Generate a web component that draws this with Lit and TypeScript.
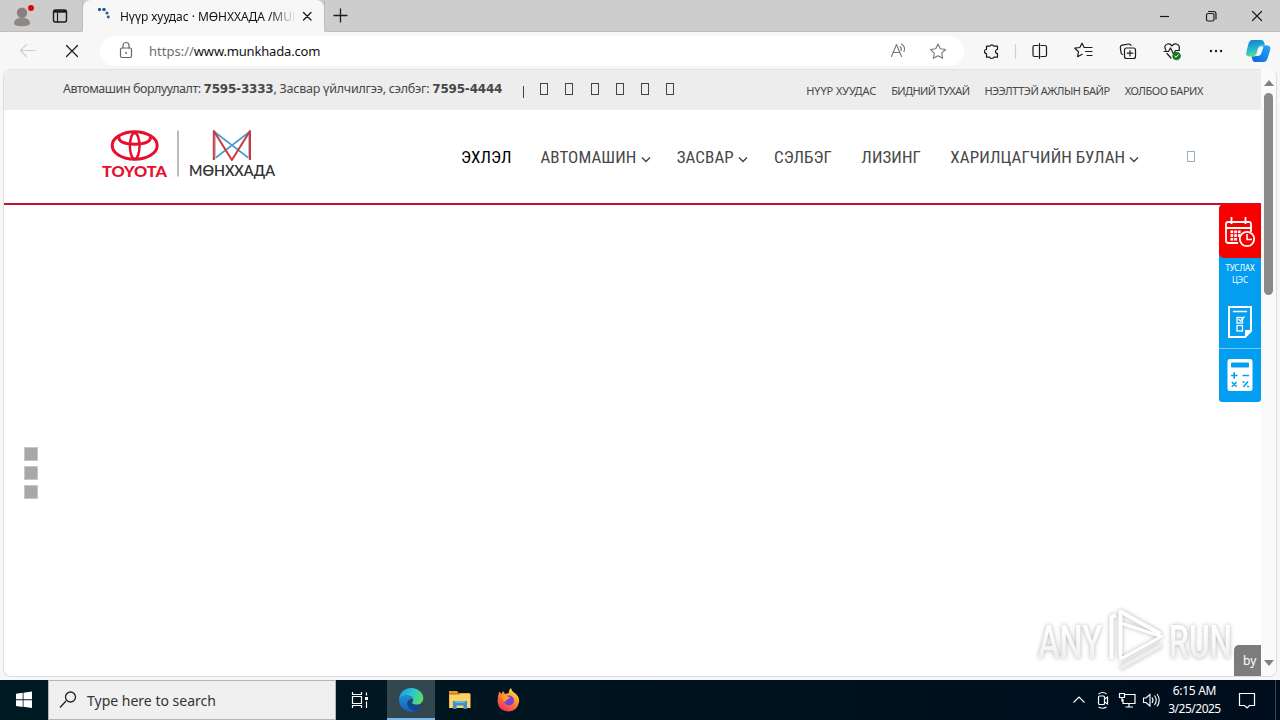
import { LitElement, html, css, svg } from 'lit';
import { customElement } from 'lit/decorators.js';
import { classMap } from 'lit/directives/class-map.js';

@customElement('browser-chrome')
class BrowserChrome extends LitElement {
  static styles = css`
    :host {
      display: block;
      font-family: 'Noto Sans', sans-serif;
      color: #111;
    }

    svg {
      display: block;
      flex: none;
      fill: none;
      stroke: #1b1b1b;
      stroke-width: 1.2;
      stroke-linecap: round;
      stroke-linejoin: round;
    }

    .titlebar {
      display: flex;
      height: 32px;
      background: #cdcdcd;
    }

    .corner {
      display: flex;
      width: 83px;
      box-sizing: border-box;
      border-bottom: 1px solid #bdbdbd;
      border-right: 1px solid #bdbdbd;
      border-radius: 0 0 5px 0;
    }

    .tab {
      display: flex;
      align-items: center;
      width: 241px;
      background: #f7f7f7;
      border-radius: 8px 8px 0 0;
    }

    .tab-title {
      width: 174px;
      margin-left: 8px;
      overflow: hidden;
      white-space: nowrap;
      font-size: 12px;
      letter-spacing: -0.05px;
      -webkit-mask-image: linear-gradient(90deg, #000 150px, transparent 176px);
      mask-image: linear-gradient(90deg, #000 150px, transparent 176px);
    }

    .spacer {
      flex: 1;
      display: flex;
      box-sizing: border-box;
      border-bottom: 1px solid #bdbdbd;
      border-left: 1px solid #bdbdbd;
      border-radius: 0 0 0 5px;
    }

    .controls {
      margin-left: auto;
    }

    .toolbar {
      display: flex;
      align-items: center;
      height: 37px;
      background: #f7f7f7;
    }

    .address {
      display: flex;
      align-items: center;
      box-sizing: border-box;
      width: 864px;
      height: 30px;
      margin-left: 1px;
      border-radius: 15px;
      background: #fff;
      font-size: 13px;
    }

    .url {
      margin-left: 9px;
      letter-spacing: -0.17px;
      flex: 1;
    }

    .scheme {
      color: #6e6e6e;
      letter-spacing: 0;
    }
  `;

  render() {
    return html`
      <div class="titlebar">
        <div class="corner">
          <svg width="82" height="31">
            <circle cx="22" cy="12.7" r="5.2" fill="#8a7f7c" stroke="none" />
            <path d="M14 24c0-5 3-6 8-6s8 1 8 6c-2 3-14 3-16 0z" fill="#8f8986" stroke="none" />
            <circle cx="31" cy="8" r="3" fill="#d60c0c" stroke="none" />
            <rect x="53.500" y="10" width="13" height="12" rx="2" stroke-width="1.4" />
            <path d="M54 11.500h12" stroke-width="2.400" stroke-linecap="butt" />
            <path d="M57.500 13v9" stroke-width="1.200" />
          </svg>
        </div>
        <div class="tab">
          <svg width="29" height="32">
            <g fill="#215a94" stroke="none">
              <rect x="15" y="8" width="3" height="3" rx="1" />
              <circle cx="21" cy="9.5" r="1.8" />
              <circle cx="24" cy="13" r="1.5" />
              <circle cx="25.3" cy="17" r="1.4" />
            </g>
          </svg>
          <div class="tab-title">Нүүр хуудас · МӨНХХАДА /MUN</div>
          <svg width="30" height="32">
            <path d="M9.500 12.500l7.500 7.500m0-7.500l-7.500 7.500" stroke-width="1.300" />
          </svg>
        </div>
        <div class="spacer">
          <svg width="32" height="31"><path d="M9 15.500h13M15.500 9v13" stroke-width="1.300" /></svg>
          <svg class="controls" width="126" height="31">
            <path d="M6 16.500h9" stroke-linecap="butt" />
            <rect x="52.500" y="13.500" width="7.500" height="7.500" rx="1.500" />
            <path d="M54.500 11.500h5q2.500 0 2.500 2.500v5" />
            <path d="M98.500 11.500l9 9m0-9l-9 9" />
          </svg>
        </div>
      </div>
      <div class="toolbar">
        <svg width="99" height="37">
          <path d="M35.500 18.500h-15m6-6l-6 6 6 6" stroke="#cfcfcf" stroke-width="1.100" />
          <path d="M66.500 13.500l11 11m0-11l-11 11" />
        </svg>
        <div class="address">
          <svg width="40" height="30">
            <g stroke="#666">
              <rect x="20.500" y="12" width="11" height="9.500" rx="1.500" />
              <path d="M23 12V9.500a3 3 0 016 0V12" />
            </g>
            <circle cx="26" cy="17" r=".9" fill="#666" stroke="none" />
          </svg>
          <div class="url"><span class="scheme">https://</span>www.munkhada.com</div>
          <svg width="84" height="30">
            <g stroke="#777" stroke-width="1.100">
              <path d="M11.500 20.500l5-12 5 12M13.500 16.500h6M20 10.500q2 1.500 1 4M21.500 8q4.500 3 2.500 7.500" />
              <path d="M58 8l2.300 4.800 5.200.7-3.800 3.600.9 5.200-4.600-2.500-4.600 2.500.9-5.200-3.800-3.600 5.200-.7z" />
            </g>
          </svg>
        </div>
        <svg width="316" height="37">
          <path
            d="M22.500 14.200h3.300a2.200 2.200 0 014 0h3.700v3.300a2 2 0 100 4v3.700h-3.700a2.200 2.200 0 01-4 0h-3.300v-3.700a2 2 0 110-4z"
          />
          <path d="M51.500 12.500v14" stroke="#d0d0d0" />
          <path d="M74 13.500h-3.500q-1.500 0-1.500 1.500v8q0 1.500 1.500 1.500H74M77 13.500h4q1.500 0 1.500 1.500v8q0 1.500-1.500 1.500h-4M75.500 11.500v15" />
          <path d="M123 15.500h-2.800l-2.200-4.300-2.200 4.300-5 .7 3.700 3.500-.9 5 4.600-2.400M123 15.500h5M121.500 19.500h6.500M123 23.500h5" />
          <rect x="160.500" y="16" width="11" height="10.500" rx="2" />
          <path d="M166 18.500v5.500M163.300 21.200h5.500M158.500 22.500q-1.500-.5-1.500-2l-.7-5q0-2 1.700-2.300l7-1.200q1.700 0 2 1.500" />
          <path
            d="M202 18.500q-3-5 1.500-6.500 3-.7 4.500 2 1.500-2.700 4.500-2 4 1.500 2.500 6M200 19.500h4.500l2-3.500 3 6 2-3.500h4M203 21.500l4 4.500"
          />
          <circle cx="212.500" cy="24" r="3.800" fill="#117a1a" stroke="#117a1a" stroke-width=".8" />
          <path d="M210.800 24.200l1.200 1 2.200-2.400" stroke="#fff" stroke-width="1" />
          <g fill="#1b1b1b" stroke="none">
            <circle cx="247" cy="19" r="1.200" /><circle cx="252" cy="19" r="1.200" /><circle cx="257" cy="19" r="1.200" />
          </g>
          <defs>
            <linearGradient id="cop-a" x1="0" y1="0" x2=".2" y2="1">
              <stop offset="0" stop-color="#167fd2" /><stop offset=".6" stop-color="#24b5d4" /><stop offset="1" stop-color="#5ddc8d" />
            </linearGradient>
            <linearGradient id="cop-b" x1="1" y1="0" x2="0" y2="1">
              <stop offset="0" stop-color="#25a8f5" /><stop offset="1" stop-color="#0c63da" />
            </linearGradient>
          </defs>
          <g stroke="none">
            <path d="M288 8h9q2.500 0 3.300 3l.7 2.500h-3q-3 0-4 3l-2 6q-.8 2-3 2h-4q-4-.5-2.500-5l2-8q1.200-3.500 3.500-3.500z" fill="url(#cop-a)" />
            <path d="M300 13.500h3.500q4 .5 2.500 5l-2.500 8q-1.200 3.500-4 3.500H291q-2 0-2.700-2.500l-.8-3h2q2.500 0 3.300-2l2.400-6q1-3 4.800-3z" fill="url(#cop-b)" />
            <path d="M297 14.500h2.500l-2 6.500q-1 3-4 3h-2.500q1.500-.5 2-2l1.600-5q.7-2 2.400-2.500z" fill="#f4fbff" />
          </g>
        </svg>
      </div>
    `;
  }
}

@customElement('site-header')
class SiteHeader extends LitElement {
  static styles = css`
    :host {
      display: block;
      color: #484848;
    }

    .topbar {
      display: flex;
      align-items: flex-start;
      box-sizing: border-box;
      height: 41px;
      padding: 0 58px 0 59px;
      background: #ededed;
      border-top: 1px solid #e2e2e2;
      white-space: nowrap;
    }

    .phones {
      width: 461px;
      padding-top: 10px;
      font: 12.5px/18px 'Noto Sans', sans-serif;
      letter-spacing: -0.24px;
    }

    .sales {
      letter-spacing: -0.45px;
    }

    .phones b {
      font: bold 12px/18px 'DejaVu Sans', sans-serif;
      letter-spacing: -0.2px;
    }

    .socials {
      display: flex;
      gap: 17.200px;
      padding-top: 13px;
    }

    .divider {
      width: 1px;
      height: 12px;
      margin: 3px -1px 0 -1px;
      background: #444;
    }

    .glyph {
      box-sizing: border-box;
      width: 8px;
      height: 12px;
      border: 1px solid #444;
    }

    .links {
      display: flex;
      gap: 15px;
      margin-left: auto;
      padding-top: 12px;
      font: 11px/18px 'Noto Sans', sans-serif;
    }

    .main {
      display: flex;
      align-items: center;
      height: 93px;
      border-bottom: 2px solid #c4122f;
      background: #fff;
    }

    .logo {
      display: block;
      flex: none;
      margin-left: 90px;
    }

    .nav {
      display: flex;
      align-items: center;
      margin-left: 177px;
      font: 17px/24px Roboto, sans-serif;
      font-stretch: 75%;
      white-space: nowrap;
    }

    .item {
      display: flex;
      align-items: center;
      margin-right: 29.400px;
      letter-spacing: 0.07px;
    }

    .item.active {
      margin-right: 29px;
      color: #000;
    }

    .item.menu {
      margin-right: 26px;
    }

    .chevron {
      margin: 6px 0 0 4.200px;
      fill: none;
      stroke: #444;
      stroke-width: 1.4;
    }

    .search {
      height: 11px;
      margin-left: 22px;
      border-color: #9bb0bc;
    }
  `;

  items = [
    { label: 'ЭХЛЭЛ', active: true },
    { label: 'АВТОМАШИН', menu: true },
    { label: 'ЗАСВАР', menu: true },
    { label: 'СЭЛБЭГ' },
    { label: 'ЛИЗИНГ' },
    { label: 'ХАРИЛЦАГЧИЙН БУЛАН', menu: true },
  ];

  links = [
    { label: 'НҮҮР ХУУДАС', tracking: -0.1 },
    { label: 'БИДНИЙ ТУХАЙ', tracking: -0.6 },
    { label: 'НЭЭЛТТЭЙ АЖЛЫН БАЙР', tracking: -0.48 },
    { label: 'ХОЛБОО БАРИХ', tracking: -0.45 },
  ];

  render() {
    return html`
      <div class="topbar">
        <div class="phones">
          <span class="sales">Автомашин борлуулалт: </span><b>7595-3333</b>, Засвар үйлчилгээ, сэлбэг: <b>7595-4444</b>
        </div>
        <div class="socials">
          <div class="divider"></div>
          ${[1, 2, 3, 4, 5, 6].map(() => html`<div class="glyph"></div>`)}
        </div>
        <div class="links">
          ${this.links.map((l) => html`<span style="letter-spacing: ${l.tracking}px">${l.label}</span>`)}
        </div>
      </div>
      <div class="main">
        <svg class="logo" width="190" height="60" viewBox="94 126.500 190 60">
          <g fill="none" stroke="#e60f2d">
            <ellipse cx="134.700" cy="145" rx="22.500" ry="13.800" stroke-width="3" />
            <ellipse cx="134.700" cy="145.500" rx="4.800" ry="13" stroke-width="2.500" />
            <path d="M119 136q-1 7.500 15.700 7.800 16.700-.3 15.700-7.800" stroke-width="3" />
          </g>
          <text x="102" y="176" textLength="65" lengthAdjust="spacingAndGlyphs" font-family="Lato" font-weight="900" font-size="15.500" fill="#e60f2d">TOYOTA</text>
          <path d="M178 130v46" stroke="#999" stroke-width="1.300" />
          <g fill="none" stroke-width="1.700" stroke-linejoin="round">
            <path d="M214 131l36 27.500M250 131l-36 27.500" stroke="#4a9fd0" />
            <path d="M215.500 133.500v25M248.500 133.500v25" stroke="#b9c6d0" stroke-width="1" />
            <path d="M213.800 159.500V130.500L231.900 159.500 250 130.500v29" stroke="#c93a42" stroke-width="2" />
          </g>
          <text x="189" y="175.500" textLength="86" lengthAdjust="spacingAndGlyphs" font-family="Lato" font-weight="600" font-size="14.500" fill="#333">МӨНХХАДА</text>
        </svg>
        <div class="nav">
          ${this.items.map(
            (i) => html`
              <div class=${classMap({ item: true, active: !!i.active, menu: !!i.menu })}>
                ${i.label}
                ${i.menu ? html`<svg class="chevron" width="10" height="7"><path d="M1 1.500l4 4 4-4" /></svg>` : ''}
              </div>
            `
          )}
          <div class="glyph search"></div>
        </div>
      </div>
    `;
  }
}

@customElement('side-tools')
class SideTools extends LitElement {
  static styles = css`
    :host {
      display: block;
      width: 42px;
      font: 8px/12px 'Noto Sans', sans-serif;
      color: #fff;
      text-align: center;
      background: #049ef0;
      border-radius: 5px 0 3px 3px;
    }

    svg {
      display: block;
      fill: none;
      stroke: #fff;
      stroke-width: 1.8;
    }

    .booking {
      height: 54px;
      background: #f60000;
      border-radius: 5px 0 0 5px;
    }

    .caption {
      height: 36px;
      padding-top: 4px;
      letter-spacing: -0.1px;
    }

    .sheet {
      border-bottom: 1px solid #7cc8f5;
    }
  `;

  render() {
    return html`
      <div class="booking">
        <svg width="42" height="54" viewBox="1219 204 42 54">
          <path d="M1238 243h-9.500q-2.500 0-2.500-2.500V224q0-2 2-2h21q2 0 2 2v8M1226 228h25M1231.500 217v7M1245.500 217v7" />
          <g fill="#fff" stroke="none">
            ${[0, 1, 2].map((r) =>
              [0, 1, 2].map((c) =>
                r === 2 && c === 2 ? '' : svg`<rect x=${1230.5 + c * 3.7} y=${230.5 + r * 3.7} width="2.7" height="2.7" />`
              )
            )}
          </g>
          <circle cx="1247" cy="239" r="7.200" fill="#f60000" />
          <path d="M1247 234v5.500h5" stroke-width="1.500" />
        </svg>
      </div>
      <div class="caption">ТУСЛАХ<br />ЦЭС</div>
      <svg class="sheet" width="42" height="50" viewBox="1219 298 42 50">
        <path d="M1229 307h22v24l-6 6h-16z" stroke-width="2" />
        <path d="M1252 330h-7v8z" fill="#fff" stroke="none" />
        <path d="M1233 311.500h14" stroke-width="1.500" />
        <g stroke-width="1.300">
          <rect x="1237" y="317.500" width="5.500" height="5.500" />
          <rect x="1237" y="325.500" width="5.500" height="5.500" />
          <path d="M1238.500 319l2 2 4-4.500" />
        </g>
      </svg>
      <svg width="42" height="53" viewBox="1219 349 42 53">
        <rect x="1227.500" y="359" width="25" height="32" rx="2.500" fill="#fff" stroke="none" />
        <rect x="1231" y="362.500" width="18" height="5" rx="1" fill="#049ef0" stroke="none" />
        <path
          d="M1231 375.500h6.500M1234.200 372.300v6.500M1242.500 375.500h6.500M1231.800 382l4.800 4.800m0-4.800l-4.800 4.800M1248 381.500l-4.500 5.500M1242.500 382h2.200M1247 386.500h2.200"
          stroke="#049ef0"
          stroke-width="1.600"
        />
      </svg>
    `;
  }
}

@customElement('task-bar')
class TaskBar extends LitElement {
  static styles = css`
    :host {
      display: flex;
      height: 40px;
      background: linear-gradient(90deg, #001a24, #00131f 55%, #000d1c);
      font-family: 'Noto Sans', sans-serif;
      color: #fff;
    }

    svg {
      display: block;
      flex: none;
      fill: none;
      stroke: #fff;
      stroke-width: 1.2;
    }

    .search {
      display: flex;
      align-items: center;
      box-sizing: border-box;
      width: 288px;
      background: #f0f0f0;
      border: 1px solid #b5b5b5;
      color: #333;
      font-size: 14px;
    }

    .edge {
      box-sizing: border-box;
      width: 48px;
      background: #33474f;
      border-bottom: 2px solid #76b9ed;
    }

    .tray {
      margin-left: auto;
    }

    .clock {
      width: 60px;
      font: 12px/18px 'Noto Sans', sans-serif;
      letter-spacing: -0.5px;
      text-align: center;
      padding: 2px 0 0 1px;
      box-sizing: border-box;
    }

    .time {
      letter-spacing: -0.3px;
    }

    .peek {
      width: 4px;
      border-left: 1px solid #3c4650;
    }
  `;

  render() {
    return html`
      <svg width="48" height="40">
        <path d="M16 13.800l6.700-1v6.500H16zM23.500 12.700l8.500-1.200v7.800h-8.500zM16 20.200h6.700v6.700l-6.700-1zM23.500 20.200H32V28l-8.500-1.200z" fill="#fff" stroke="none" />
      </svg>
      <div class="search">
        <svg width="38" height="38"><path d="M17 20l-6 6.500M26.500 16a5 5 0 11-10 0 5 5 0 0110 0z" stroke="#222" stroke-width="1.300" /></svg>
        Type here to search
      </div>
      <svg width="51" height="40">
        <path d="M16.500 12v2.500h9V12M16.500 28v-2.500h9V28M16.500 16.500h9v7h-9zM30.500 12.500v3M30.500 21.500v6.500" />
        <rect x="29" y="17" width="3" height="3" fill="#fff" stroke="none" />
      </svg>
      <div class="edge">
        <svg width="48" height="38">
          <defs>
            <linearGradient id="edge-a" x1="0" x2="1" y1=".3" y2=".6">
              <stop offset="0" stop-color="#1b9de2" /><stop offset=".5" stop-color="#2cc5d1" /><stop offset="1" stop-color="#5fdc5f" />
            </linearGradient>
            <linearGradient id="edge-b" x1="0" x2="0" y1="0" y2="1">
              <stop offset="0" stop-color="#1b8fd9" /><stop offset="1" stop-color="#1460b8" />
            </linearGradient>
          </defs>
          <g stroke="none">
            <path d="M12 19.500C12.500 12 18 8 24 8c8 0 12.500 5.500 12.300 10.500C36 22.500 33 24.500 29.500 24.500c-3.500 0-5-1.200-4-2.500 2.500-3-1-6.500-5-6.500-4.500 0-7.500 2-8.500 4z" fill="url(#edge-a)" />
            <path d="M12 19.500c1.500-3 5-4.500 8.500-4 3 .3 5 2 5.300 4-3.500-1-6 1.500-5.300 5 .8 4 5 7 10 6C22 34.500 12 29 12 19.500z" fill="url(#edge-b)" />
            <path d="M20.500 24.500c-.7-3.500 1.500-5.500 4.500-5.300-2 2.500-.5 6 5 6 2.200 0 4-.7 5-1.300-1 3.500-4 6-6.500 6.500-4 .5-7.500-2.500-8-5.900z" fill="#10488f" />
          </g>
        </svg>
      </div>
      <svg width="49" height="40">
        <g stroke="none">
          <path d="M14 11h8l1.500 2H35v15H14z" fill="#e9a22c" />
          <rect x="14.500" y="14" width="21" height="14" fill="#fcd364" />
          <path d="M14 13h11v1.500H14z" fill="#c97c12" />
          <path d="M18 21h14v8h-3.500v-3.500h-7V29H18z" fill="#3a8fd3" />
          <path d="M20 21h10v2H20z" fill="#67b4e8" />
        </g>
      </svg>
      <svg width="49" height="40" viewBox="-.500 0 49 40">
        <defs>
          <linearGradient id="fox" x1=".8" x2=".2" y1="0" y2="1">
            <stop offset="0" stop-color="#fff04a" /><stop offset=".45" stop-color="#ff8a2b" /><stop offset="1" stop-color="#f5245f" />
          </linearGradient>
        </defs>
        <g stroke="none">
          <path d="M15 11.500l2 2.500 1.500-3 2 3 4-1q-.5-3 2-5 .5 3 3 4.500 6 4 5 9.500-1.500 9-10.500 9.500-10-.5-11-10 0-6 2-10z" fill="url(#fox)" />
          <circle cx="24.500" cy="20.500" r="5" fill="#7a3fd6" />
          <path d="M16.500 16q4-1.500 7 .5l2.500 1-3 2q-2 .5-2 2.500-3-1-4.500-6z" fill="#ff9a2c" />
        </g>
      </svg>
      <svg class="tray" width="104" height="40" viewBox="-4.500 0 104 40">
        <path d="M9 22.500l5.500-5.500 5.500 5.500" />
        <rect x="34" y="16" width="6" height="8.500" rx="1" />
        <path d="M40 19l3-2v7l-3-2M34 14q4.500-3 8 0M34 27q4.500 2.500 8 0" />
        <path d="M60 14.500h10.500v9H58.500V19M64.500 23.500v3M61 27h7.500M55 13.500h5v4h-5zM57.500 17.500v4" />
        <path d="M79 18h2.500l4-3.500v11.500l-4-3.500H79zM87.500 17.500q2 2.700 0 5.500M90 15.500q3.500 4.700 0 9.500M92.500 14q4.500 6.200 0 12.500" stroke-width="1.100" />
      </svg>
      <div class="clock"><span class="time">6:15 AM</span><br />3/25/2025</div>
      <svg width="51" height="40"><path d="M15.500 13.500h15v12h-5l-2.500 2.500-2.500-2.500h-5z" /></svg>
      <div class="peek"></div>
    `;
  }
}

@customElement('app-root')
class AppRoot extends LitElement {
  static styles = css`
    :host {
      display: flex;
      flex-direction: column;
      width: 1280px;
      height: 720px;
      overflow: hidden;
      background: #f7f7f7;
    }

    .window {
      flex: 1;
      display: flex;
      box-sizing: border-box;
      margin: 0 3px 3px;
      border: 1px solid #dcdcdc;
      border-top: 0;
      border-radius: 8px;
      overflow: hidden;
      background: #fff;
    }

    .page {
      position: relative;
      width: 1257px;
    }

    .tools {
      position: absolute;
      top: 135px;
      right: 0;
    }

    .bullets {
      position: absolute;
      left: 20px;
      top: 378px;
      display: grid;
      gap: 5px;
    }

    .bullet {
      width: 14px;
      height: 14px;
      box-sizing: border-box;
      background: #a8a8a8;
      border: 1px solid #c8c8c8;
    }

    .badge {
      position: absolute;
      right: 0;
      bottom: 0;
      width: 27px;
      height: 31px;
      box-sizing: border-box;
      padding-left: 9px;
      border-radius: 5px 0 0 0;
      background: #7c7c7c;
      color: #fff;
      font: 12px/31px 'Noto Sans', sans-serif;
    }

    .watermark {
      position: absolute;
      right: 28px;
      bottom: 2px;
      overflow: visible;
      filter: drop-shadow(0 0 2px rgba(0, 0, 0, 0.3));
    }

    .scroll {
      display: flex;
      flex-direction: column;
      align-items: center;
      width: 15px;
      background: #fafafa;
    }

    .scroll svg {
      fill: #808080;
    }

    .up {
      margin-top: 11px;
    }

    .thumb {
      width: 9px;
      height: 202px;
      margin-top: 7px;
      border-radius: 5px;
      background: #8a8a8a;
    }

    .down {
      margin: auto 0 10px;
    }
  `;

  render() {
    return html`
      <browser-chrome></browser-chrome>
      <div class="window">
        <div class="page">
          <site-header></site-header>
          <side-tools class="tools"></side-tools>
          <div class="bullets">${[1, 2, 3].map(() => html`<div class="bullet"></div>`)}</div>
          <svg class="watermark" width="196" height="68" viewBox="1037 607 196 68">
            <defs>
              <linearGradient id="fade" x1="0" x2="0" y1="0" y2="1">
                <stop offset=".3" stop-color="#fff" /><stop offset="1" stop-color="#e8e8e8" />
              </linearGradient>
            </defs>
            <g font-family="Roboto" font-size="47" font-weight="500" fill="url(#fade)">
              <text x="1038" y="659" textLength="64" lengthAdjust="spacingAndGlyphs">ANY</text>
              <text x="1169" y="659" textLength="63" lengthAdjust="spacingAndGlyphs">RUN</text>
            </g>
            <g fill="none" stroke="#fff" stroke-width="4" stroke-linejoin="round">
              <path d="M1111.500 660v-42l4-2" />
              <path d="M1120.500 655v-42.500l40 22.500" />
              <path d="M1120.500 624v36l41-22.500z" stroke-width="3" />
              <path d="M1120.500 669l41-23" stroke="#eee" />
            </g>
          </svg>
          <div class="badge">by</div>
        </div>
        <div class="scroll">
          <svg class="up" width="10" height="6"><path d="M5 0l5 6H0z" /></svg>
          <div class="thumb"></div>
          <svg class="down" width="10" height="6"><path d="M5 6l5-6H0z" /></svg>
        </div>
      </div>
      <task-bar></task-bar>
    `;
  }
}
